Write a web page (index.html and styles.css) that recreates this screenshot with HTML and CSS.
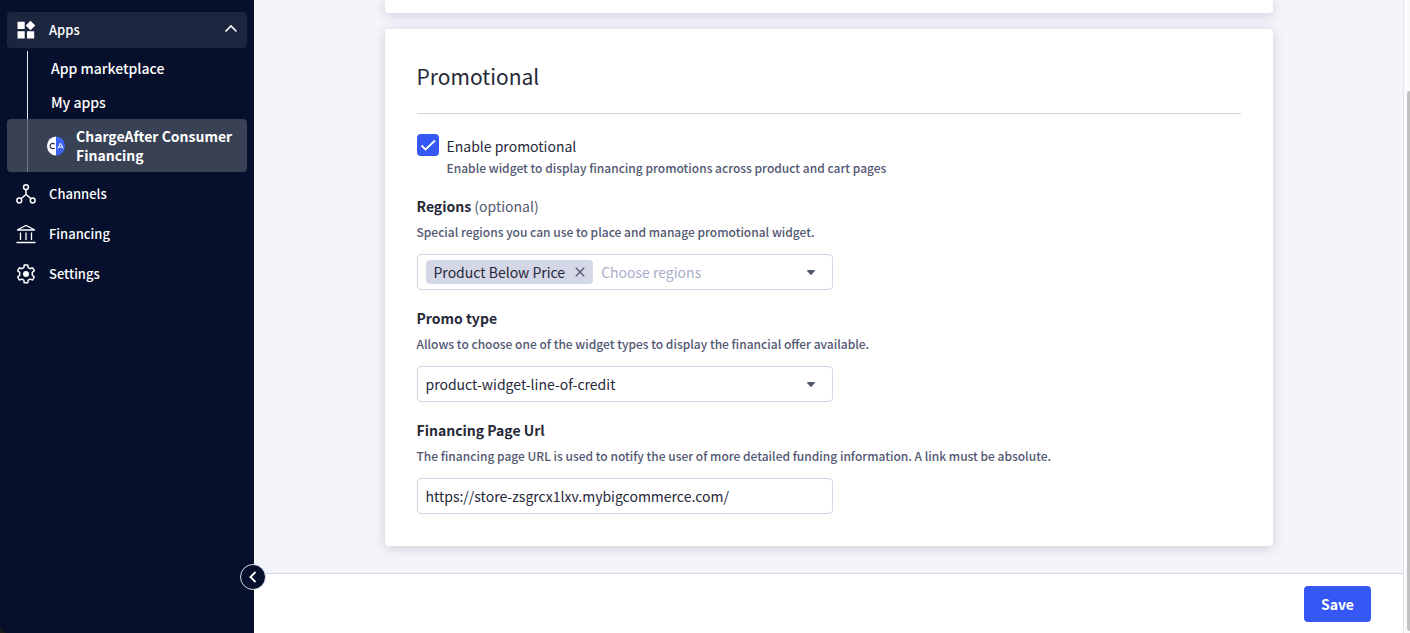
FILE: index.html
```html
<!DOCTYPE html>
<html lang="en">
<head>
<meta charset="utf-8">
<title>ChargeAfter Consumer Financing</title>
<link rel="stylesheet" href="styles.css">
</head>
<body>
<div class="app">
  <aside class="sidebar">
    <nav class="nav">
      <button class="nav-item nav-item-open" type="button" aria-expanded="true">
        <svg class="nav-icon" viewBox="0 0 20 20" fill="currentColor" aria-hidden="true"><path d="M1.500 1.800h7.200v7.200H1.500zM1.500 11.300h7.200v7.200H1.500zM11 11.300h7.200v7.200H11zM14.500 .7l4.800 4.800-4.800 4.800-4.800-4.800z"/></svg>
        <span class="nav-label">Apps</span>
        <svg class="nav-chevron" viewBox="0 0 14 14" fill="none" stroke="currentColor" stroke-width="1.600" aria-hidden="true"><path d="M1.500 8.500L7 3l5.500 5.500"/></svg>
      </button>
      <div class="subnav">
        <a class="sub-item" href="#marketplace">App marketplace</a>
        <a class="sub-item" href="#my-apps">My apps</a>
        <a class="sub-item sub-item-active" href="#chargeafter" aria-current="page">
          <svg class="app-logo" viewBox="0 0 18 20" aria-hidden="true"><defs><clipPath id="oval"><ellipse cx="9" cy="10" rx="9" ry="9.500"/></clipPath></defs><g clip-path="url(#oval)"><path fill="#fff" d="M0 0h9v20H0z"/><path fill="#3c64f4" d="M9 0h9v20H9z"/></g><path d="M7.600 8.200A2.600 2.600 0 1 0 7.600 11.800" fill="none" stroke="#27304c" stroke-width="1.200"/><path d="M10.800 12.600L13.500 7.200l2.700 5.400M11.900 11h3.300" fill="none" stroke="#fff"/></svg>
          <span>ChargeAfter Consumer Financing</span>
        </a>
      </div>
      <a class="nav-item" href="#channels">
        <svg class="nav-icon" viewBox="0 0 20 20" fill="none" stroke="currentColor" stroke-width="1.500" aria-hidden="true"><circle cx="10" cy="3.200" r="2.400"/><circle cx="3.300" cy="16.500" r="2.400"/><circle cx="16.700" cy="16.500" r="2.400"/><path d="M10 5.600V11M5 14.800L10 10.500l5 4.300"/></svg>
        <span class="nav-label">Channels</span>
      </a>
      <a class="nav-item" href="#financing">
        <svg class="nav-icon" viewBox="0 0 20 20" fill="none" stroke="currentColor" stroke-width="1.300" aria-hidden="true"><path d="M.5 18.500h19M1 6h18M2 5.500L10 1.500l8 4M4.500 8.500v7.500M10 8.500v7.500M15.500 8.500v7.500"/></svg>
        <span class="nav-label">Financing</span>
      </a>
      <a class="nav-item" href="#settings">
        <svg class="nav-icon" viewBox="0 0 20 20" fill="none" stroke="currentColor" stroke-width="1.500" stroke-linejoin="round" aria-hidden="true"><path d="M8.300 1h3.400l.5 2.600 1.900 1.100 2.500-.9 1.700 2.900-2 1.700v2.900l2 1.700-1.700 3-2.500-.9-1.900 1.100-.5 2.600H8.300l-.5-2.600-1.900-1.100-2.500.9-1.700-3 2-1.700V8.400l-2-1.700 1.700-2.900 2.500.9 1.900-1.100z"/><circle cx="10" cy="9.900" r="3" fill="currentColor" stroke="none"/></svg>
        <span class="nav-label">Settings</span>
      </a>
    </nav>
    <button class="collapse" type="button" aria-label="Collapse menu">
      <svg viewBox="0 0 14 14" fill="none" stroke="currentColor" stroke-width="1.800" aria-hidden="true"><path d="M9.500 2l-5 5 5 5"/></svg>
    </button>
  </aside>

  <div class="page">
    <main class="content">
      <section class="card card-previous"></section>
      <section class="card">
        <h2 class="card-title">Promotional</h2>
        <div class="check-row">
          <span class="check-box">
            <input class="check-input" type="checkbox" id="enable" checked aria-describedby="enable-hint">
            <svg class="check-mark" viewBox="0 0 22 22" fill="none" stroke="currentColor" stroke-width="1.800" aria-hidden="true"><path d="M4.500 11.500l4 4L18 6.500"/></svg>
          </span>
          <div>
            <label class="check-label" for="enable">Enable promotional</label>
            <p class="hint" id="enable-hint">Enable widget to display financing promotions across product and cart pages</p>
          </div>
        </div>

        <div class="field">
          <label class="label" for="regions">Regions <span class="optional">(optional)</span></label>
          <p class="hint field-hint">Special regions you can use to place and manage promotional widget.</p>
          <div class="control multi">
            <span class="chip">Product Below Price
              <button class="chip-remove" type="button" aria-label="Remove Product Below Price"><svg viewBox="0 0 10 10" fill="none" stroke="currentColor" stroke-width="1.300" aria-hidden="true"><path d="M.8.8l8.400 8.400M9.200.8L.8 9.200"/></svg></button>
            </span>
            <input class="multi-input" id="regions" type="text" placeholder="Choose regions">
            <svg class="caret" viewBox="0 0 8 5" fill="currentColor" aria-hidden="true"><path d="M.8 0h6.400q1.200.2.400 1.300L4.800 4.400q-.8.800-1.600 0L.4 1.300Q-.4.200.8 0z"/></svg>
          </div>
        </div>

        <div class="field">
          <label class="label" for="promo">Promo type</label>
          <p class="hint field-hint">Allows to choose one of the widget types to display the financial offer available.</p>
          <div class="select-wrap">
            <select class="control select" id="promo"><option>product-widget-line-of-credit</option></select>
            <svg class="caret" viewBox="0 0 8 5" fill="currentColor" aria-hidden="true"><path d="M.8 0h6.400q1.200.2.400 1.300L4.800 4.400q-.8.800-1.600 0L.4 1.300Q-.4.200.8 0z"/></svg>
          </div>
        </div>

        <div class="field">
          <label class="label" for="url">Financing Page Url</label>
          <p class="hint field-hint">The financing page URL is used to notify the user of more detailed funding information. A link must be absolute.</p>
          <input class="control" id="url" type="text" value="https://store-zsgrcx1lxv.mybigcommerce.com/">
        </div>
      </section>
    </main>
    <footer class="footer">
      <button class="save" type="button">Save</button>
    </footer>
  </div>
  <div class="scroll-track" aria-hidden="true"><div class="scroll-thumb"></div></div>
</div>
</body>
</html>
```

FILE: styles.css
```css
* { box-sizing: border-box; }

body {
  margin: 0;
  background: #1c1c1c;
  color: #26283a;
  font: 14px/24px "Noto Sans CJK SC", "Open Sans", sans-serif;
}

button, input, select { font: inherit; color: inherit; }
button { cursor: pointer; }
a { color: inherit; text-decoration: none; }
p, h2 { margin: 0; }
svg { display: block; }

.app { display: flex; height: 100vh; overflow: hidden; }

/* Sidebar */
.sidebar {
  position: relative;
  z-index: 1;
  flex: none;
  width: 254px;
  padding: 12px 7px;
  background: #060f2b;
  color: #fff;
  border-radius: 0 0 0 8px;
  font-weight: 500;
}
.nav { display: flex; flex-direction: column; gap: 4px; }
.nav-item {
  display: flex;
  align-items: center;
  gap: 13px;
  height: 36px;
  padding: 0 9px;
  border: 0;
  border-radius: 4px;
  background: none;
  font-size: 13px;
  text-align: left;
}
.nav-item-open { background: #1c253e; }
.nav-icon { width: 20px; height: 20px; flex: none; }
.nav-label { flex: 1; }
.nav-chevron { width: 14px; height: 14px; }

.subnav {
  display: flex;
  flex-direction: column;
  margin-top: -1px;
  background: linear-gradient(#e6e8f0, #e6e8f0) 20px 0 / 1px 100% no-repeat;
}
.sub-item { padding: 5px 8px 5px 44px; }
.sub-item-active {
  display: flex;
  align-items: center;
  gap: 11px;
  padding: 8px 8px 7px 40px;
  border-radius: 4px;
  background: linear-gradient(#737987, #737987) 20px 0 / 1px 100% no-repeat #394155;
  font-weight: 700;
  line-height: 19px;
}
.app-logo { flex: none; width: 18px; height: 20px; }

.collapse {
  position: absolute;
  right: -12px;
  bottom: 43px;
  display: grid;
  place-items: center;
  width: 26px;
  height: 26px;
  padding: 0;
  border: 1px solid #d9dce9;
  border-radius: 50%;
  background: #060f2b;
  color: #fff;
}
.collapse svg { width: 14px; height: 14px; }

/* Page */
.page { flex: 1; min-width: 0; display: flex; flex-direction: column; background: #f4f5fb; }
.content {
  flex: 1;
  min-height: 0;
  overflow: hidden;
  display: flex;
  flex-direction: column;
  align-items: center;
  gap: 16px;
}
.card {
  width: 100%;
  max-width: 888px;
  padding: 32px;
  background: #fff;
  border-radius: 4px;
  box-shadow: 0 2px 12px rgba(49, 52, 64, .2);
}
.card-previous { flex: none; padding: 13px 0 0; border-radius: 0 0 4px 4px; }
.card-title {
  padding-bottom: 22px;
  margin-bottom: 20px;
  border-bottom: 1px solid #d3d5de;
  font-size: 21px;
  line-height: 30px;
  font-weight: 400;
}

.check-row { display: flex; gap: 8px; }
.check-box { display: grid; width: 22px; height: 22px; flex: none; }
.check-input, .check-mark { grid-area: 1 / 1; width: 22px; height: 22px; }
.check-input { appearance: none; margin: 0; border-radius: 4px; background: #3558f5; }
.check-mark { z-index: 1; color: #fff; pointer-events: none; }
.check-label, .label { display: block; line-height: 24px; }
.hint { color: #525872; font-size: 12px; font-weight: 500; line-height: 20px; }

.field { margin-top: 16px; }
.label { font-weight: 700; }
.optional { color: #525872; font-weight: 400; }
.field-hint { margin: 4px 0 12px; }

.control {
  display: block;
  width: 100%;
  max-width: 416px;
  height: 36px;
  padding: 0 8px;
  border: 1px solid #d2d5e6;
  border-radius: 4px;
  background: #fff;
}
.multi { display: flex; align-items: center; gap: 8px; padding-right: 17px; }
.chip {
  display: flex;
  align-items: center;
  gap: 10px;
  padding: 0 8px;
  border-radius: 4px;
  background: #d4d7e6;
  white-space: nowrap;
}
.chip-remove { padding: 0; border: 0; background: none; color: #525872; }
.chip-remove svg { width: 10px; height: 10px; }
.multi-input { flex: 1; min-width: 0; padding: 0; border: 0; outline: 0; background: none; }
.multi-input::placeholder { color: #a9aeca; }
.caret { flex: none; width: 8px; height: 5px; color: #525872; }

.select-wrap { display: grid; align-items: center; max-width: 416px; }
.select-wrap > * { grid-area: 1 / 1; }
.select-wrap .caret { z-index: 1; justify-self: end; margin-right: 18px; pointer-events: none; }
.select { appearance: none; }

.footer {
  display: flex;
  justify-content: flex-end;
  padding: 12px 32px 11px;
  border-top: 1px solid #d2d5e6;
  background: #fff;
}
.save {
  height: 36px;
  padding: 0 17px;
  border: 0;
  border-radius: 4px;
  background: #3558f5;
  color: #fff;
  font-weight: 700;
}

.scroll-track {
  flex: none;
  width: 7px;
  padding: 91px 0 2px 3px;
  border-left: 1px solid #e5e5e8;
  background: #fafafa;
}
.scroll-thumb { height: 100%; border-radius: 4px 0 0 4px; background: #c1c1c1; }
```
